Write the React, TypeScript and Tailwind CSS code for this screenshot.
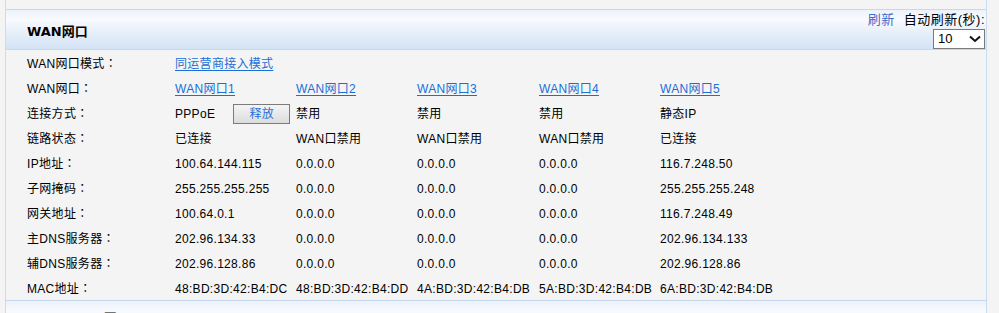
import React from "react";

const font = { fontFamily: '"Liberation Sans", "Noto Sans CJK SC", sans-serif' };
const tcFont = { fontFamily: '"Noto Sans CJK TC", sans-serif' };

type Cell = React.ReactNode;

function Link({ children }: { children: React.ReactNode }) {
  return <span className="text-[#1a6fd6] underline underline-offset-[2px] decoration-[1px]">{children}</span>;
}

function Label({ text }: { text: string }) {
  return (
    <div className="whitespace-nowrap">
      {text}
      <span style={tcFont}>：</span>
    </div>
  );
}

const rows: { label: string; cells: Cell[] }[] = [
  {
    label: "WAN网口",
    cells: [<Link>WAN网口1</Link>, <Link>WAN网口2</Link>, <Link>WAN网口3</Link>, <Link>WAN网口4</Link>, <Link>WAN网口5</Link>],
  },
  {
    label: "连接方式",
    cells: [
      <div className="flex items-center">
        <span>PPPoE</span>
        <button className="ml-[18px] w-[57px] h-[20px] border border-[#7b7b7b] bg-gradient-to-b from-[#f4f4f4] to-[#dcdcdc] text-[#2a6fd8] text-[12px] leading-none flex items-center justify-center">
          释放
        </button>
      </div>,
      "禁用",
      "禁用",
      "禁用",
      "静态IP",
    ],
  },
  { label: "链路状态", cells: ["已连接", "WAN口禁用", "WAN口禁用", "WAN口禁用", "已连接"] },
  { label: "IP地址", cells: ["100.64.144.115", "0.0.0.0", "0.0.0.0", "0.0.0.0", "116.7.248.50"] },
  { label: "子网掩码", cells: ["255.255.255.255", "0.0.0.0", "0.0.0.0", "0.0.0.0", "255.255.255.248"] },
  { label: "网关地址", cells: ["100.64.0.1", "0.0.0.0", "0.0.0.0", "0.0.0.0", "116.7.248.49"] },
  { label: "主DNS服务器", cells: ["202.96.134.33", "0.0.0.0", "0.0.0.0", "0.0.0.0", "202.96.134.133"] },
  { label: "辅DNS服务器", cells: ["202.96.128.86", "0.0.0.0", "0.0.0.0", "0.0.0.0", "202.96.128.86"] },
  {
    label: "MAC地址",
    cells: ["48:BD:3D:42:B4:DC", "48:BD:3D:42:B4:DD", "4A:BD:3D:42:B4:DB", "5A:BD:3D:42:B4:DB", "6A:BD:3D:42:B4:DB"],
  },
];

const gridCls = "grid grid-cols-[148px_121px_121px_122px_121px_1fr] items-center h-[25px] pt-[2px] pl-[21px]";

export default function App() {
  return (
    <div className="w-full h-[313px] overflow-hidden bg-[#f4f4f4] text-black flex" style={font}>
      <div className="ml-[5px] mr-[12px] flex-1 min-w-0 border-l border-r border-[#c9dcf1] pt-[9px]">
        {/* header */}
        <div className="border-t border-b border-[#c5d8ee] bg-[linear-gradient(to_bottom,#ecf2fb_0%,#f8fafe_25%,#e6eef9_60%,#d3e3f6_100%)] h-[41px] flex justify-between">
          <div
            className="pl-[21px] pt-[15px] text-[13px] font-bold leading-none"
            style={{ fontFamily: '"DejaVu Sans", "Noto Sans CJK SC", sans-serif' }}
          >
            WAN网口
          </div>
          <div className="w-[160px] shrink-0 flex flex-col items-end pt-[2px] pr-[1px]">
            <div className="w-full flex justify-end whitespace-nowrap text-[13px] tracking-[0.5px] leading-[16px] h-[16px]">
              <span className="text-[#3a6ccc] mr-[9px]">刷新</span>
              <span>自动刷新(秒):</span>
            </div>
            <div className="mt-[1px] w-[52px] h-[20px] border border-[#7a7a7a] bg-white flex items-center justify-between pl-[4px] pr-[3px] text-[13px]">
              <span>10</span>
              <svg width="12" height="8" viewBox="0 0 12 8">
                <path d="M1 1.5 L6 6 L11 1.5" fill="none" stroke="#111" strokeWidth="2" />
              </svg>
            </div>
          </div>
        </div>

        {/* table */}
        <div className="text-[12px] tracking-[0.3px] leading-none">
          <div className={gridCls}>
            <Label text="WAN网口模式" />
            <div className="col-span-5">
              <Link>同运营商接入模式</Link>
            </div>
          </div>
          {rows.map((r, i) => (
            <div key={i} className={gridCls}>
              <Label text={r.label} />
              {r.cells.map((c, j) => (
                <div key={j} className="whitespace-nowrap">
                  {c}
                </div>
              ))}
            </div>
          ))}
        </div>

        {/* next header */}
        <div className="border-t border-[#c5d8ee] bg-[linear-gradient(to_bottom,#ecf2fb_0%,#f8fafe_25%,#e6eef9_60%,#d3e3f6_100%)] h-[40px]">
          <div
            className="pl-[21px] pt-[11px] text-[13px] font-bold leading-none"
            style={{ fontFamily: '"DejaVu Sans", "Noto Sans CJK SC", sans-serif' }}
          >
            Multi-WAN网口
          </div>
        </div>
      </div>
    </div>
  );
}
